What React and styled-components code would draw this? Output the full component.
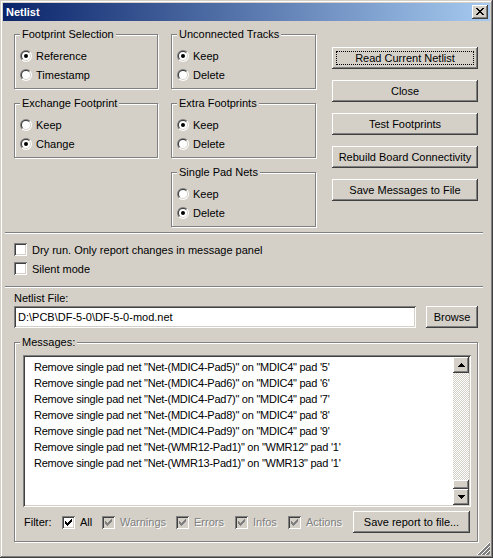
import React, { useId } from "react";
import styled, { createGlobalStyle } from "styled-components";

const GlobalStyle = createGlobalStyle`
  html, body { margin: 0; padding: 0; background: #d4d0c8; }
  body { font-family: "Liberation Sans", Arial, sans-serif; font-size: 11px; color: #000; }
  * { box-sizing: border-box; }
`;

const raised = `box-shadow: inset -1px -1px #404040, inset 1px 1px #ffffff, inset -2px -2px #808080, inset 2px 2px #d4d0c8;`;
const sunken = `box-shadow: inset 1px 1px #808080, inset -1px -1px #ffffff, inset 2px 2px #404040, inset -2px -2px #d4d0c8;`;

const Window = styled.div`
  position: relative;
  width: 493px;
  height: 558px;
  background: #d4d0c8;
  padding: 3px;
  box-shadow: inset -1px -1px #404040, inset 1px 1px #d4d0c8, inset -2px -2px #808080, inset 2px 2px #ffffff;
  display: flex;
  flex-direction: column;
`;

const TitleBar = styled.div`
  height: 18px;
  flex: none;
  background: linear-gradient(to right, #0a246a, #a6caf0);
  display: flex;
  align-items: center;
  justify-content: space-between;
  padding: 0 2px 0 3px;
`;

const TitleText = styled.span`
  color: #fff;
  font-weight: bold;
  font-size: 11px;
  line-height: 13px;
`;

const CloseButton = styled.div`
  width: 16px;
  height: 14px;
  background: #d4d0c8;
  ${raised}
  display: flex;
  align-items: center;
  justify-content: center;
  padding-bottom: 1px;
`;

const Body = styled.div`
  flex: 1;
  display: flex;
  flex-direction: column;
  padding: 13px 0 0 11px;
`;

const TopSection = styled.div`
  display: flex;
  align-items: flex-start;
`;

const Column = styled.div`
  display: flex;
  flex-direction: column;
  gap: 14px;
  width: ${(p) => p.$w}px;
  margin-left: ${(p) => p.$ml || 0}px;
`;

const ButtonColumn = styled.div`
  display: flex;
  flex-direction: column;
  gap: 11px;
  width: 146px;
  margin-left: 16px;
  margin-top: 13px;
`;

const GroupBox = styled.div`
  display: flex;
  flex-direction: column;
  width: ${(p) => (p.$w ? `${p.$w}px` : "100%")};
  height: ${(p) => p.$h}px;
  border: 1px solid #808080;
  box-shadow: inset 1px 1px #ffffff, 1px 1px #ffffff;
`;

const GroupLabel = styled.span`
  align-self: flex-start;
  margin: -7px 0 0 5px;
  padding: 0 2px;
  height: 13px;
  line-height: 13px;
  background: #d4d0c8;
  white-space: nowrap;
`;

const RadioList = styled.div`
  display: flex;
  flex-direction: column;
  padding: 5px 0 0 5px;
`;

const OptionRow = styled.label`
  display: flex;
  align-items: center;
  height: 19px;
  gap: ${(p) => p.$gap || 4}px;
  white-space: nowrap;
`;

const Button = styled.div`
  width: ${(p) => (p.$w ? `${p.$w}px` : "100%")};
  height: 22px;
  flex: none;
  background: #d4d0c8;
  ${raised}
  display: flex;
  align-items: center;
  justify-content: center;
  white-space: nowrap;
  line-height: 13px;
  position: relative;
  margin-left: ${(p) => p.$ml || 0}px;
`;

const FocusRing = styled.span`
  padding: 2px 0;
  width: calc(100% - 8px);
  height: calc(100% - 8px);
  border: 1px dotted #000;
  display: flex;
  align-items: center;
  justify-content: center;
`;

const Separator = styled.div`
  height: 2px;
  flex: none;
  border-top: 1px solid #808080;
  border-bottom: 1px solid #ffffff;
  margin: ${(p) => p.$mt}px 7px 0 -9px;
`;

const CheckList = styled.div`
  display: flex;
  flex-direction: column;
  padding-top: 6px;
`;

const FieldLabel = styled.div`
  margin-top: 4px;
  height: 13px;
  line-height: 13px;
`;

const FileRow = styled.div`
  display: flex;
  margin-top: 1px;
`;

const TextField = styled.div`
  width: 402px;
  height: 22px;
  background: #fff;
  ${sunken}
  padding: 0 4px;
  display: flex;
  align-items: center;
  line-height: 13px;
  white-space: nowrap;
`;

const MessagesBox = styled(GroupBox)`
  margin-top: 14px;
`;

const ListBox = styled.div`
  margin: 6px 0 0 8px;
  width: 448px;
  height: 152px;
  flex: none;
  background: #fff;
  ${sunken}
  padding: 2px;
  display: flex;
`;

const MessageArea = styled.div`
  flex: 1;
  overflow: hidden;
  padding-left: 9px;
`;

const MessageLines = styled.div`
  margin-top: -14px;
`;

const MessageLine = styled.div`
  height: 16px;
  line-height: 16px;
  white-space: nowrap;
  letter-spacing: -0.25px;
`;

const ScrollBar = styled.div`
  width: 16px;
  display: flex;
  flex-direction: column;
`;

const ScrollButton = styled.div`
  width: 16px;
  height: 16px;
  flex: none;
  background: #d4d0c8;
  ${raised}
  display: flex;
  align-items: center;
  justify-content: center;
`;

const ScrollTrack = styled.div`
  flex: 1;
  display: flex;
  flex-direction: column;
  justify-content: flex-end;
  background-image: repeating-conic-gradient(#d4d0c8 0 25%, #ffffff 0 50%);
  background-size: 2px 2px;
`;

const ScrollThumb = styled.div`
  height: 9px;
  background: #d4d0c8;
  ${raised}
`;

const FilterRow = styled.div`
  display: flex;
  align-items: center;
  height: 22px;
  margin: 4px 0 0 9px;
  width: 446px;
`;

const FilterItem = styled.label`
  display: flex;
  align-items: center;
  gap: 5px;
  width: ${(p) => p.$w}px;
  flex: none;
  white-space: nowrap;
  color: ${(p) => (p.$disabled ? "#808080" : "#000")};
  text-shadow: ${(p) => (p.$disabled ? "1px 1px #ffffff" : "none")};
`;

const FilterLabel = styled.span`
  width: 38px;
  flex: none;
`;

const SaveButton = styled(Button)`
  margin-left: auto;
`;

const Grip = styled.div`
  position: absolute;
  right: 3px;
  bottom: 3px;
  width: 13px;
  height: 13px;
  line-height: 0;
`;

function Pixels({ rows, color = "#000" }) {
  const w = rows[0].length;
  const h = rows.length;
  const rects = [];
  rows.forEach((r, y) =>
    r.split("").forEach((c, x) => {
      if (c === "X") rects.push(<rect key={`${x}-${y}`} x={x} y={y} width="1" height="1" />);
    })
  );
  return (
    <svg width={w} height={h} viewBox={`0 0 ${w} ${h}`} fill={color} shapeRendering="crispEdges">
      {rects}
    </svg>
  );
}

const CLOSE_X = [
  "XX....XX",
  ".XX..XX.",
  "..XXXX..",
  "...XX...",
  "..XXXX..",
  ".XX..XX.",
  "XX....XX",
];
const UP = ["...X...", "..XXX..", ".XXXXX.", "XXXXXXX"];
const DOWN = ["XXXXXXX", ".XXXXX.", "..XXX..", "...X..."];
const CHECK = [
  "......X",
  ".....XX",
  "X...XXX",
  "XX.XXX.",
  "XXXXX..",
  ".XXX...",
  "..X....",
];

function Radio({ checked }) {
  const raw = useId();
  const id = "r" + raw.replace(/[^a-zA-Z0-9]/g, "");
  return (
    <svg width="12" height="12" viewBox="0 0 12 12" style={{ flex: "none" }}>
      <defs>
        <clipPath id={id + "tl"}>
          <polygon points="0,0 12,0 0,12" />
        </clipPath>
        <clipPath id={id + "br"}>
          <polygon points="12,0 12,12 0,12" />
        </clipPath>
      </defs>
      <circle cx="6" cy="6" r="6" fill="#808080" clipPath={`url(#${id}tl)`} />
      <circle cx="6" cy="6" r="6" fill="#ffffff" clipPath={`url(#${id}br)`} />
      <circle cx="6" cy="6" r="5" fill="#404040" clipPath={`url(#${id}tl)`} />
      <circle cx="6" cy="6" r="5" fill="#d4d0c8" clipPath={`url(#${id}br)`} />
      <circle cx="6" cy="6" r="4" fill="#ffffff" />
      {checked && <circle cx="6" cy="6" r="2" fill="#000" />}
    </svg>
  );
}

const CheckBoxFrame = styled.span`
  width: 13px;
  height: 13px;
  flex: none;
  background: ${(p) => (p.$disabled ? "#d4d0c8" : "#ffffff")};
  ${sunken}
  display: flex;
  align-items: center;
  justify-content: center;
  line-height: 0;
`;

function CheckBox({ checked, disabled }) {
  return (
    <CheckBoxFrame $disabled={disabled}>
      {checked && <Pixels rows={CHECK} color={disabled ? "#808080" : "#000"} />}
    </CheckBoxFrame>
  );
}

function RadioGroup({ title, options, selected, h = 55, w }) {
  return (
    <GroupBox $h={h} $w={w}>
      <GroupLabel>{title}</GroupLabel>
      <RadioList>
        {options.map((o, i) => (
          <OptionRow key={o}>
            <Radio checked={i === selected} />
            <span>{o}</span>
          </OptionRow>
        ))}
      </RadioList>
    </GroupBox>
  );
}

const messages = [
  `Remove single pad net "Net-(MDIC4-Pad4)" on "MDIC4" pad '4'`,
  `Remove single pad net "Net-(MDIC4-Pad5)" on "MDIC4" pad '5'`,
  `Remove single pad net "Net-(MDIC4-Pad6)" on "MDIC4" pad '6'`,
  `Remove single pad net "Net-(MDIC4-Pad7)" on "MDIC4" pad '7'`,
  `Remove single pad net "Net-(MDIC4-Pad8)" on "MDIC4" pad '8'`,
  `Remove single pad net "Net-(MDIC4-Pad9)" on "MDIC4" pad '9'`,
  `Remove single pad net "Net-(WMR12-Pad1)" on "WMR12" pad '1'`,
  `Remove single pad net "Net-(WMR13-Pad1)" on "WMR13" pad '1'`,
];

const filters = [
  { label: "All", w: 40, disabled: false },
  { label: "Warnings", w: 74, disabled: true },
  { label: "Errors", w: 59, disabled: true },
  { label: "Infos", w: 53, disabled: true },
  { label: "Actions", w: 60, disabled: true },
];

export default function App() {
  return (
    <>
      <GlobalStyle />
      <Window>
        <TitleBar>
          <TitleText>Netlist</TitleText>
          <CloseButton>
            <Pixels rows={CLOSE_X} />
          </CloseButton>
        </TitleBar>
        <Body>
          <TopSection>
            <Column $w={144}>
              <RadioGroup title="Footprint Selection" options={["Reference", "Timestamp"]} selected={0} />
              <RadioGroup title="Exchange Footprint" options={["Keep", "Change"]} selected={1} />
            </Column>
            <Column $w={145} $ml={13}>
              <RadioGroup title="Unconnected Tracks" options={["Keep", "Delete"]} selected={0} />
              <RadioGroup title="Extra Footprints" options={["Keep", "Delete"]} selected={0} />
              <RadioGroup title="Single Pad Nets" options={["Keep", "Delete"]} selected={1} />
            </Column>
            <ButtonColumn>
              <Button>
                <FocusRing>Read Current Netlist</FocusRing>
              </Button>
              <Button>Close</Button>
              <Button>Test Footprints</Button>
              <Button>Rebuild Board Connectivity</Button>
              <Button>Save Messages to File</Button>
            </ButtonColumn>
          </TopSection>
          <Separator $mt={5} />
          <CheckList>
            <OptionRow $gap={5}>
              <CheckBox />
              <span>Dry run. Only report changes in message panel</span>
            </OptionRow>
            <OptionRow $gap={5}>
              <CheckBox />
              <span>Silent mode</span>
            </OptionRow>
          </CheckList>
          <Separator $mt={8} />
          <FieldLabel>Netlist File:</FieldLabel>
          <FileRow>
            <TextField>D:\PCB\DF-5-0\DF-5-0-mod.net</TextField>
            <Button $w={52} $ml={10}>Browse</Button>
          </FileRow>
          <MessagesBox $h={200} $w={464}>
            <GroupLabel>Messages:</GroupLabel>
            <ListBox>
              <MessageArea>
                <MessageLines>
                  {messages.map((m) => (
                    <MessageLine key={m}>{m}</MessageLine>
                  ))}
                </MessageLines>
              </MessageArea>
              <ScrollBar>
                <ScrollButton>
                  <Pixels rows={UP} />
                </ScrollButton>
                <ScrollTrack>
                  <ScrollThumb />
                </ScrollTrack>
                <ScrollButton>
                  <Pixels rows={DOWN} />
                </ScrollButton>
              </ScrollBar>
            </ListBox>
            <FilterRow>
              <FilterLabel>Filter:</FilterLabel>
              {filters.map((f) => (
                <FilterItem key={f.label} $w={f.w} $disabled={f.disabled}>
                  <CheckBox checked disabled={f.disabled} />
                  <span>{f.label}</span>
                </FilterItem>
              ))}
              <SaveButton $w={117}>Save report to file...</SaveButton>
            </FilterRow>
          </MessagesBox>
        </Body>
        <Grip>
          <svg width="13" height="13" viewBox="0 0 13 13" shapeRendering="crispEdges">
            {[0, 4, 8].map((k) => (
              <g key={k}>
                <line x1={13} y1={k + 0.5} x2={k + 0.5} y2={13} stroke="#ffffff" />
                <line x1={13} y1={k + 1.5} x2={k + 1.5} y2={13} stroke="#808080" />
                <line x1={13} y1={k + 2.5} x2={k + 2.5} y2={13} stroke="#808080" />
              </g>
            ))}
          </svg>
        </Grip>
      </Window>
    </>
  );
}
